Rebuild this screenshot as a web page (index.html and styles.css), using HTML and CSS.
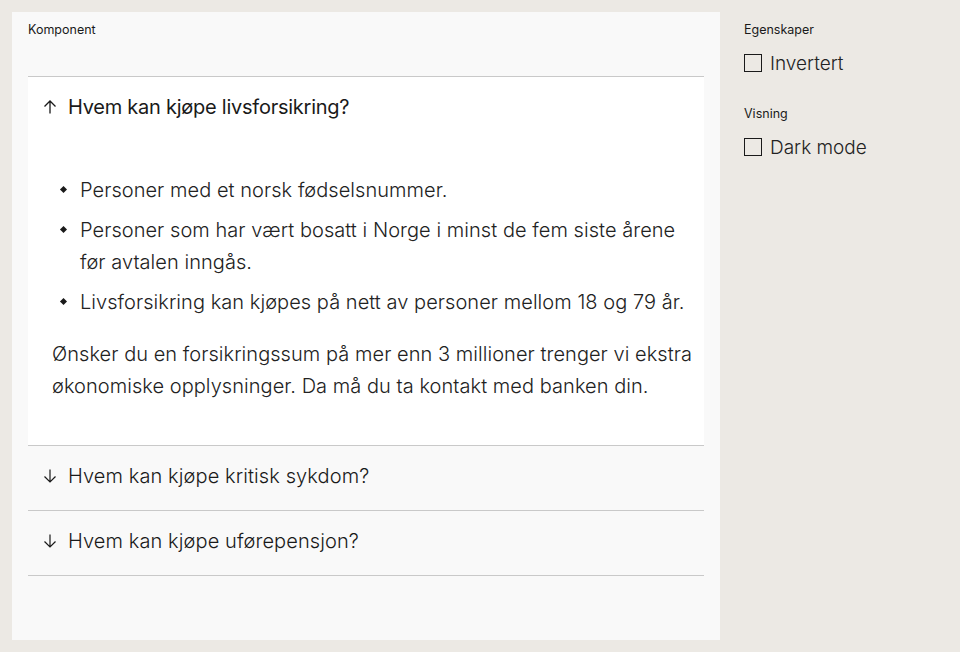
FILE: index.html
```html
<!DOCTYPE html>
<html lang="no">
<head>
<meta charset="utf-8">
<title>Komponent</title>
<link rel="stylesheet" href="styles.css">
</head>
<body>
<div class="page">
  <main class="panel">
    <div class="label">Komponent</div>
    <div class="accordion">
      <section class="item open">
        <div class="head">
          <svg class="arrow" viewBox="0 0 16 16" width="16" height="16"><path d="M8 14.5V2M2.5 7.5L8 2l5.5 5.5" fill="none" stroke="#1a1a1a" stroke-width="1.3"/></svg>
          <span>Hvem kan kjøpe livsforsikring?</span>
        </div>
        <div class="body">
          <ul class="list">
            <li>Personer med et norsk fødselsnummer.</li>
            <li>Personer som har vært bosatt i Norge i minst de fem siste årene før avtalen inngås.</li>
            <li>Livsforsikring kan kjøpes på nett av personer mellom 18 og 79 år.</li>
          </ul>
          <p class="para">Ønsker du en forsikringssum på mer enn 3 millioner trenger vi ekstra økonomiske opplysninger. Da må du ta kontakt med banken din.</p>
        </div>
      </section>
      <section class="item">
        <div class="head">
          <svg class="arrow" viewBox="0 0 16 16" width="16" height="16"><path d="M8 1.5V14M2.5 8.5L8 14l5.5-5.5" fill="none" stroke="#1a1a1a" stroke-width="1.2"/></svg>
          <span>Hvem kan kjøpe kritisk sykdom?</span>
        </div>
      </section>
      <section class="item">
        <div class="head">
          <svg class="arrow" viewBox="0 0 16 16" width="16" height="16"><path d="M8 1.5V14M2.5 8.5L8 14l5.5-5.5" fill="none" stroke="#1a1a1a" stroke-width="1.2"/></svg>
          <span>Hvem kan kjøpe uførepensjon?</span>
        </div>
      </section>
    </div>
  </main>
  <aside class="side">
    <div class="label">Egenskaper</div>
    <label class="check"><span class="box"></span><span>Invertert</span></label>
    <div class="label second">Visning</div>
    <label class="check"><span class="box"></span><span>Dark mode</span></label>
  </aside>
</div>
</body>
</html>
```

FILE: styles.css
```css
html, body {
  margin: 0;
  padding: 0;
  background: #ece9e4;
}
body {
  font-family: Inter, "Noto Sans", "Liberation Sans", sans-serif;
  color: #1a1a1a;
}
.page {
  display: flex;
  gap: 24px;
  padding: 12px;
  height: 652px;
  box-sizing: border-box;
}
.panel {
  width: 708px;
  height: 628px;
  background: #f9f9f9;
  box-sizing: border-box;
  padding: 10px 16px;
}
.label {
  font-size: 12.5px;
  line-height: 16px;
  color: #1a1a1a;
}
.accordion {
  margin-top: 38px;
}
.item {
  border-top: 1px solid #c9c9c9;
}
.item:last-child {
  border-bottom: 1px solid #c9c9c9;
}
.item.open {
  background: #ffffff;
}
.head {
  display: flex;
  align-items: center;
  height: 60px;
  padding-bottom: 4px;
  padding-left: 14px;
  font-size: 20px;
  font-weight: 300;
  letter-spacing: 0.1px;
  color: #1a1a1a;
}
.arrow {
  width: 16px;
  height: 16px;
  margin-right: 10px;
  flex: none;
}
.open .head {
  font-weight: 400;
  letter-spacing: -0.25px;
}
.body {
  padding: 33px 0 43px 24px;
  font-size: 20px;
  line-height: 32px;
  font-weight: 300;
  color: #222222;
}
.list {
  list-style: none;
  margin: 0 0 20px 0;
  padding: 0;
  letter-spacing: 0.05px;
}
.list li {
  position: relative;
  padding-left: 28px;
  margin-bottom: 8px;
}
.list li::before {
  content: "";
  position: absolute;
  left: 9px;
  top: 13px;
  width: 5px;
  height: 5px;
  background: #1a1a1a;
  transform: rotate(45deg);
}
.para {
  margin: 0;
  letter-spacing: 0.05px;
}
.side {
  padding-top: 10px;
  width: 200px;
}
.check {
  display: flex;
  align-items: center;
  margin-top: 13px;
  height: 24px;
  font-size: 19px;
  font-weight: 300;
  color: #222222;
}
.box {
  width: 16px;
  height: 16px;
  border: 1px solid #1a1a1a;
  margin-right: 8px;
  flex: none;
}
.label.second {
  margin-top: 31px;
}
```
